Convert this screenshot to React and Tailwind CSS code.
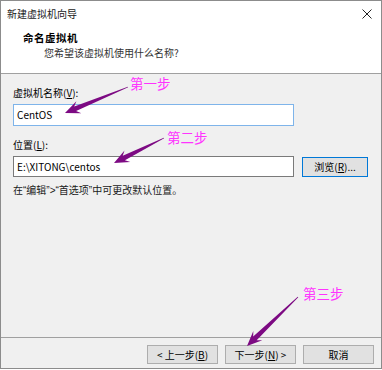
import React from 'react';

const font = "font-['Noto_Sans_CJK_SC','Noto_Sans',sans-serif]";

function Arrow({ tail, tip }) {
    // tapered shaft with a concave arrow head
    const [tx, ty] = tail;
    const [px, py] = tip;
    const len = Math.hypot(px - tx, py - ty);
    const dx = (px - tx) / len;
    const dy = (py - ty) / len;
    const nx = -dy;
    const ny = dx;
    const headLen = 15;
    const bx = px - dx * headLen;
    const by = py - dy * headLen;
    const cx = px - dx * (headLen - 4);
    const cy = py - dy * (headLen - 4);
    const pts = [
        [tx + nx * 0.4, ty + ny * 0.4],
        [cx + nx * 2.5, cy + ny * 2.5],
        [bx + nx * 6.5, by + ny * 6.5],
        [px, py],
        [bx - nx * 6.5, by - ny * 6.5],
        [cx - nx * 2.5, cy - ny * 2.5],
        [tx - nx * 0.4, ty - ny * 0.4],
    ];
    return <polygon points={pts.map(p => p.join(',')).join(' ')} fill="#7d0a83" />;
}

function Btn({ children, primary, className = '' }) {
    return (
        <div className={`h-[19px] flex items-center justify-center text-[10px] text-black bg-[#e1e1e1] border ${primary ? 'border-[#0078d7]' : 'border-[#adadad]'} ${className}`}>
            {children}
        </div>
    );
}

const Q = ({ children }) => <span className="font-['Liberation_Sans',sans-serif]">{children}</span>;

export default function App() {
    return (
        <div className={`relative w-[382px] h-[369px] bg-white ${font}`}>
            <div className="w-full h-full border border-[#8c8c8c] flex flex-col bg-[#f0f0f0]">
                {/* title bar */}
                <div className="h-[25px] bg-white flex items-center justify-between pl-[6px] pr-[9px]">
                    <span className="text-[10px] text-[#1a1a1a] leading-[14px]">新建虚拟机向导</span>
                    <svg width="10" height="10" viewBox="0 0 10 10">
                        <path d="M0.5 0.5 L9.5 9.5 M9.5 0.5 L0.5 9.5" stroke="#222" strokeWidth="1" />
                    </svg>
                </div>

                {/* header */}
                <div className="h-[48px] bg-white border-b border-[#a0a0a0] pt-[5px]">
                    <div className="pl-[22px] text-[10.5px] font-bold leading-[14px] text-black tracking-[0.5px]">命名虚拟机</div>
                    <div className="pl-[43px] mt-[1px] text-[10px] leading-[14px] text-[#333]">您希望该虚拟机使用什么名称?</div>
                </div>

                {/* body */}
                <div className="flex-1 pt-[12px] pl-[12px] pr-[13px] text-[10px] text-black">
                    <div className="leading-[14px]">虚拟机名称(<span className="underline">V</span>):</div>
                    <div className="mt-[4px] w-[281px] h-[22px] bg-white border border-[#7eb4ea] flex items-center pl-[3px] leading-[14px]">CentOS</div>

                    <div className="mt-[12px] leading-[14px]">位置(<span className="underline">L</span>):</div>
                    <div className="mt-[4px] flex items-center gap-[8px]">
                        <div className="w-[281px] h-[21px] bg-white border border-[#7a7a7a] flex items-center pl-[3px] leading-[14px]">E:\XITONG\centos</div>
                        <Btn primary className="w-[66px] h-[20px]">浏览(<span className="underline">R</span>)...</Btn>
                    </div>
                    <div className="mt-[6px] leading-[14px] text-[#1a1a1a]">在<Q>“</Q>编辑<Q>”&gt;“</Q>首选项<Q>”</Q>中可更改默认位置。</div>
                </div>

                {/* footer */}
                <div className="h-[31px] border-t border-[#a0a0a0] pt-[7px] pr-[7px] flex justify-end gap-[7px]">
                    <Btn className="w-[71px]">&lt; 上一步(<span className="underline">B</span>)</Btn>
                    <Btn className="w-[71px]">下一步(<span className="underline">N</span>) &gt;</Btn>
                    <Btn className="w-[71px]">取消</Btn>
                </div>
            </div>

            {/* annotations */}
            <svg className="absolute left-0 top-0 pointer-events-none" width="382" height="369">
                <Arrow tail={[128, 87]} tip={[65, 113]} />
                <Arrow tail={[164, 138]} tip={[114, 163]} />
                <Arrow tail={[298, 297]} tip={[247, 346]} />
            </svg>
            <span className="absolute left-[130px] top-[74px] text-[13.5px] leading-[18px] text-[#ff33ff]">第一步</span>
            <span className="absolute left-[167px] top-[128px] text-[13.5px] leading-[18px] text-[#ff33ff]">第二步</span>
            <span className="absolute left-[303px] top-[284px] text-[13.5px] leading-[18px] text-[#ff33ff]">第三步</span>
        </div>
    );
}
